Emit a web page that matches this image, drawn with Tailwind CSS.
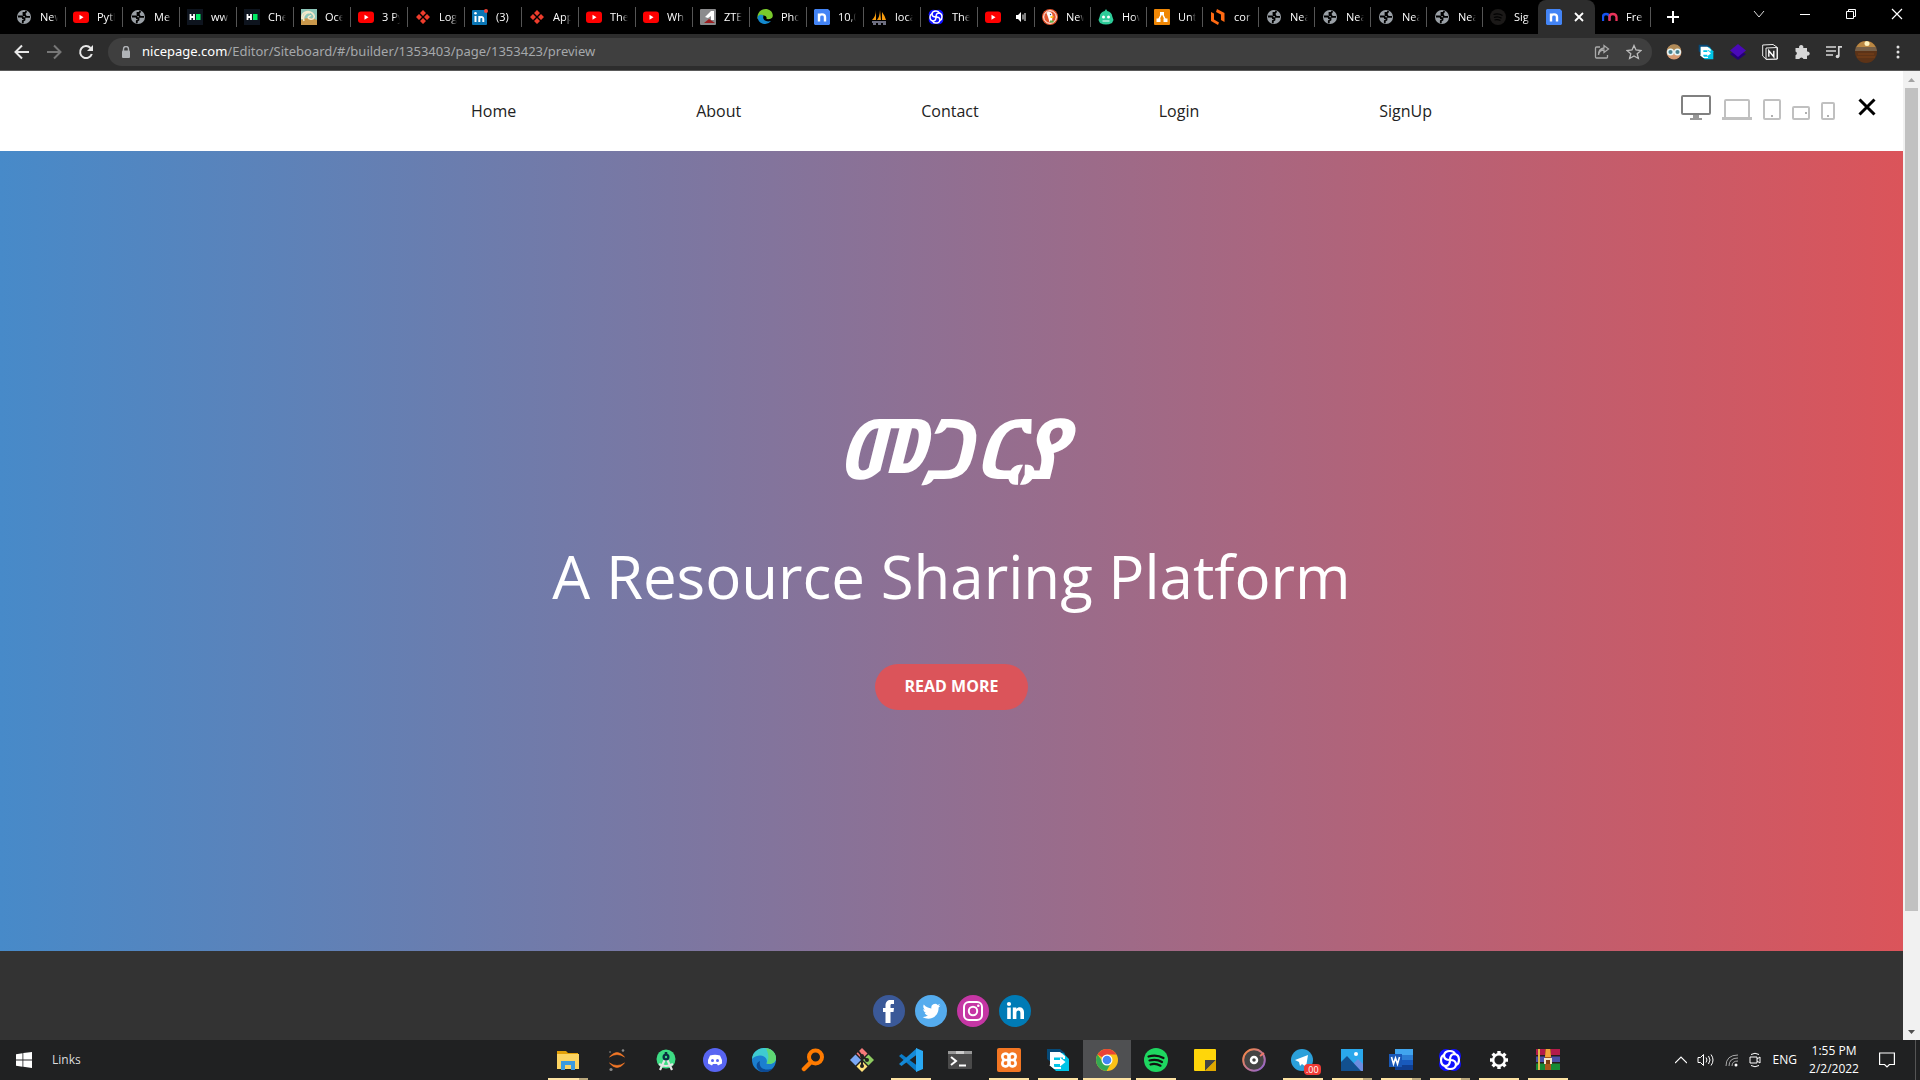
<!DOCTYPE html>
<html lang="en">
<head>
<meta charset="utf-8">
<title>Nicepage preview</title>
<script src="https://cdn.jsdelivr.net/npm/@tailwindcss/browser@4"></script>
</head>
<body class="h-screen flex flex-col overflow-hidden bg-black font-['Open_Sans','Noto_Sans',sans-serif]">

<svg class="hidden" aria-hidden="true">
  <symbol id="globe" viewBox="0 0 16 16"><circle cx="8" cy="8" r="7" fill="#9aa0a6"/><path d="M2 7.500h3.500q1.500.3 1.500 1.700h1.500v1.500L6.800 12v2.200M10.500 2.200L9 4H7.500v2H9l1 1.800h4" fill="none" stroke="#000" stroke-width="1.800"/></symbol>
  <symbol id="yt" viewBox="0 0 16 16"><rect y="2.500" width="16" height="11.500" rx="3" fill="#f00"/><path d="M6.500 5.800v5l4-2.500z" fill="#fff"/></symbol>
  <symbol id="hk" viewBox="0 0 16 16"><rect width="16" height="16" fill="#0e141e"/><path d="M3.500 5v6M7 5v6M3.500 8H7" stroke="#fff" stroke-width="1.800"/><rect x="9" y="5" width="4.500" height="6" fill="#00ea64"/></symbol>
  <symbol id="wave" viewBox="0 0 16 16"><rect width="16" height="16" fill="#8cc5b8"/><path d="M0 11q8-4 16 0v5H0z" fill="#c9974a"/><path d="M1 10C0 3 7 1 11 4s2 7-2 6 0-4 1-3M3 12C1 6 6 3 9 4" fill="none" stroke="#f3e9cc" stroke-width="1.600"/></symbol>
  <symbol id="diamond" viewBox="0 0 16 16"><path d="M8 1l3 3-3 3-3-3zM8 9l3 3-3 3-3-3zM4 5l3 3-3 3-3-3zM12 5l3 3-3 3-3-3z" fill="#ee3d2c"/></symbol>
  <symbol id="linkedin" viewBox="0 0 16 16"><rect y="1" width="15" height="15" rx="1" fill="#0a76b5"/><path d="M3.500 7v6M7.300 7v6M7.300 10c0-2.600 4-3 4 0v3" fill="none" stroke="#fff" stroke-width="2"/><circle cx="3.500" cy="4.300" r="1.300" fill="#fff"/><circle cx="14" cy="2" r="2" fill="#f04438"/></symbol>
  <symbol id="zte" viewBox="0 0 16 16"><rect width="16" height="16" rx="1" fill="#8b8b8d"/><path d="M5 8l6-6h3v9h-3V7L8 9z" fill="#fff"/><path d="M4 14l5-4 6 4z" fill="#9c1c1f"/></symbol>
  <symbol id="phedge" viewBox="0 0 16 16"><path d="M.5 8C1-2.500 15.500-2 15.800 6.500 15.800 10 12 10.500 9.500 10c1-3-3-5-6-2L.5 10z" fill="#79c92c"/><path d="M.5 8C2 5 6 5.500 6.500 7c-1.500 3.500 2 6.500 7.500 5A7.500 7.500 0 0 1 .5 8z" fill="#1389ce"/></symbol>
  <symbol id="nicepage" viewBox="0 0 16 16"><path d="M1 0h13l2 2v13l-1 1H1l-1-1V1z" fill="#4384f5"/><path d="M5 12.500V4.500M5 8c0-3.500 6-3.500 6 0v4.500" fill="none" stroke="#fff" stroke-width="2.400"/></symbol>
  <symbol id="pma" viewBox="0 0 16 16"><path d="M5 1Q5 7 1 11h4zM9 1q-.3 7-3 10h4zM11 3q3 4 4 8h-4z" fill="#f89c0e"/><path d="M1 13h14M2 15h3M7 15h3M12 15h3" stroke="#9294ac" stroke-width="1.500"/></symbol>
  <symbol id="swirl" viewBox="0 0 24 24"><g fill="#1010ff"><circle cx="8" cy="8" r="7"/><circle cx="16" cy="8" r="7"/><circle cx="8" cy="16" r="7"/><circle cx="16" cy="16" r="7"/></g><g fill="none" stroke="#fff" stroke-width="2.200" stroke-linecap="round"><path d="M12 12Q6 12 6 7.500 6.500 3 12 3q4 0 5 3"/><path d="M12 12Q12 6 16.500 6 21 6.500 21 12q0 4-3 5"/><path d="M12 12q6 0 6 4.500-.5 4.500-6 4.500-4 0-5-3"/><path d="M12 12q0 6-4.500 6Q3 17.500 3 12q0-4 3-5"/></g></symbol>
  <symbol id="duck" viewBox="0 0 16 16"><circle cx="8" cy="8" r="8" fill="#e4562f"/><circle cx="8" cy="8" r="6.300" fill="none" stroke="#fff"/><path d="M4.500 4C6 2 10.500 2.500 10.500 6.500L10 13H7.500L6 8z" fill="#fff"/><circle cx="8.500" cy="5.500" r=".7" fill="#2d4f8e"/><path d="M8.500 7.300H12L11 9H8.500z" fill="#fdc014"/><path d="M8 11.500h3.500v2H8z" fill="#5ab847"/></symbol>
  <symbol id="robot" viewBox="0 0 16 16"><path d="M8 0l1.300 2c3 .8 4.700 2.500 5 5.500L15.500 11 14 14q-6 3-12 0L.5 11l1.200-3.500c.3-3 2-4.700 5-5.500z" fill="#2dcb98"/><circle cx="5.500" cy="8" r="1.500" fill="#fff"/><circle cx="10.500" cy="8" r="1.500" fill="#fff"/><path d="M4.500 12h7" stroke="#fff"/></symbol>
  <symbol id="drawio" viewBox="0 0 16 16"><rect width="16" height="16" rx="1" fill="#f08705"/><path d="M8 4L4.500 11M8 4l3.500 7" stroke="#fff" stroke-width="1.500"/><path d="M6 3h4v3H6zM2.500 9.500h4v3.500h-4zM9.500 9.500h4v3.500h-4z" fill="#fff"/></symbol>
  <symbol id="hex" viewBox="0 0 16 16"><path d="M1 3l3 1.500v6l5 3-1 2.500L1 12zM7 0l7.500 4v9L11 11V5.500L6 3z" fill="#ff6a13"/></symbol>
  <symbol id="spotdim" viewBox="0 0 16 16"><circle cx="8" cy="8" r="8" fill="#1b1918"/><path d="M3.500 5.500q5-1.500 9 1M4 8.500q4-1.500 7.500.8M4.500 11q3-1 6 .5" fill="none" stroke="#000" stroke-width="1.300"/></symbol>
  <symbol id="mm" viewBox="0 0 16 16"><path d="M1 12V8c0-4 6-4 6.500 0v3" fill="none" stroke="#1552f0" stroke-width="2.300"/><path d="M7.500 12V8c0-4 6.500-4 7 0v4" fill="none" stroke="#e9335b" stroke-width="2.300"/></symbol>
  <symbol id="arrowapp" viewBox="0 0 24 24"><path d="M1 1h13l5 4v10H6l-5-4z" fill="#064a78"/><path d="M4 5h13l6 6v12H10l-6-6z" fill="#00c4e6"/><path d="M4 4h10l5 4v3h-2V9.500H8v2.500h6V9.500L19.500 14 14 18.500V16H8v3.500L4 17z" fill="#fff"/><path d="M4 16.500L8.500 20H15" fill="none" stroke="#fff" stroke-width="2"/></symbol>
</svg>

<!-- Tab strip -->
<header class="shrink-0">
  <div class="h-[34px] flex pl-[9px] text-[11px] text-white">
    <div id="tabs" class="flex"></div>
    <button class="w-11 flex items-center justify-center" aria-label="New tab"><svg class="size-3" viewBox="0 0 12 12" stroke="#fff" stroke-width="2"><path d="M6 0v12M0 6h12"/></svg></button>
    <div class="ml-auto flex h-7">
      <button class="w-[46px] flex items-center justify-center" aria-label="Search tabs"><svg class="size-3" viewBox="0 0 12 12" fill="none" stroke="#ddd"><path d="M1 3l5 6 5-6"/></svg></button>
      <button class="w-[46px] flex items-center justify-center" aria-label="Minimize"><svg class="size-3" viewBox="0 0 12 12" stroke="#fff"><path d="M1 6.500h10"/></svg></button>
      <button class="w-[46px] flex items-center justify-center" aria-label="Restore"><svg class="size-3" viewBox="0 0 12 12" fill="none" stroke="#fff"><path d="M1.500 3.500h7v7h-7zM3.500 3V1.500h7v7H9"/></svg></button>
      <button class="w-[46px] flex items-center justify-center" aria-label="Close"><svg class="size-3" viewBox="0 0 12 12" stroke="#fff" stroke-width="1.200"><path d="M1 1l10 10M11 1L1 11"/></svg></button>
    </div>
  </div>

  <!-- Toolbar -->
  <div class="h-[37px] flex items-center bg-[#2d2d2d] border-b border-[#5a5a5a] px-1.5">
    <div class="flex">
      <button class="w-8 flex justify-center" aria-label="Back"><svg class="size-4" viewBox="0 0 16 16" fill="none" stroke="#e8e8e8" stroke-width="2"><path d="M15 8H2M8 1.500L1.500 8 8 14.500"/></svg></button>
      <button class="w-8 flex justify-center" aria-label="Forward"><svg class="size-4" viewBox="0 0 16 16" fill="none" stroke="#777" stroke-width="2"><path d="M1 8h13M8 1.500L14.500 8 8 14.500"/></svg></button>
      <button class="w-8 flex justify-center" aria-label="Reload"><svg class="size-4" viewBox="0 0 16 16" fill="none" stroke="#e8e8e8" stroke-width="2"><path d="M13.800 10A6 6 0 1 1 12.500 4"/><path d="M15 1v6H9z" fill="#e8e8e8" stroke="none"/></svg></button>
    </div>
    <div class="ml-1.5 h-7 flex-1 flex items-center rounded-full bg-[#3f3f3f] pl-3 pr-2.5">
      <svg class="w-3 h-3" viewBox="0 0 12 12"><path d="M3.500 5V3a2.500 2.500 0 0 1 5 0v2" fill="none" stroke="#b0b3b7" stroke-width="1.400"/><rect x="2" y="4.500" width="8" height="7.500" rx="1" fill="#b0b3b7"/></svg>
      <a href="#" class="ml-2.5 flex-1 text-[13px] text-[#a5a8ab] whitespace-nowrap font-['Noto_Sans',sans-serif]"><span class="text-white">nicepage.com</span>/Editor/Siteboard/#/builder/1353403/page/1353423/preview</a>
      <button class="w-8 flex justify-center" aria-label="Share"><svg class="size-4" viewBox="0 0 16 16" fill="none" stroke="#aaa" stroke-width="1.300"><path d="M6 3H2.500a1 1 0 0 0-1 1v9a1 1 0 0 0 1 1h10a1 1 0 0 0 1-1v-2"/><path d="M4.500 11C5 7 7 6 10 6V8.500L14.500 5 10 1.500V4C6 4.500 4.500 7 4.500 11z"/></svg></button>
      <button class="w-4 ml-2 flex justify-center" aria-label="Bookmark"><svg class="size-4" viewBox="0 0 16 16" fill="none" stroke="#bbb" stroke-width="1.300"><path d="M8 1.500l2 4.500 5 .5-3.800 3.200 1.200 4.800L8 12l-4.400 2.500 1.200-4.800L1 6.500 6 6z"/></svg></button>
    </div>
    <div class="flex items-center pl-1.5">
      <button class="w-8 flex justify-center" aria-label="Extension"><svg class="size-4" viewBox="0 0 16 16"><circle cx="8" cy="8" r="7.500" fill="#d69a72"/><path d="M1 6Q3 0 8 .5 14 0 15 6z" fill="#b08a57"/><circle cx="4.500" cy="8" r="2.800" fill="#47808e" stroke="#e6f4f6" stroke-width="1.500"/><circle cx="11.500" cy="8" r="2.800" fill="#47808e" stroke="#e6f4f6" stroke-width="1.500"/></svg></button>
      <button class="w-8 flex justify-center" aria-label="Share extension"><svg class="size-4"><use href="#arrowapp"/></svg></button>
      <button class="w-8 flex justify-center" aria-label="Layers"><svg class="size-4" viewBox="0 0 16 16"><path d="M0 10l8-4 8 4-8 6z" fill="#240074"/><path d="M0 6.500L8 0l8 6.500L8 13z" fill="#4a09b8"/></svg></button>
      <button class="w-8 flex justify-center" aria-label="Notion"><svg class="size-4" viewBox="0 0 16 16"><path d="M.7 1L11 .5l4.500 3V15l-11 .5L.7 12z" fill="#222" stroke="#eee"/><path d="M4 4l11-.5V15l-11 .3z" fill="#2d2d2d" stroke="#eee"/><path d="M6.800 12.800v-6l5 6v-6" fill="none" stroke="#fff" stroke-width="1.400"/></svg></button>
      <button class="w-8 flex justify-center" aria-label="Extensions"><svg class="size-4" viewBox="0 0 16 16"><path d="M1.500 4h3.700a2.200 2.200 0 1 1 4 0H13v3.600a2.100 2.100 0 1 1 0 4V15H9.500a2.200 2.200 0 0 0-4.200 0H1.500v-3.800a2 2 0 0 0 0-3.800z" fill="#d6d6d6"/></svg></button>
      <button class="w-8 flex justify-center" aria-label="Media"><svg class="size-4" viewBox="0 0 16 16" fill="none" stroke="#d6d6d6" stroke-width="1.700"><path d="M0 3h10M0 7h10M0 11h7M12.800 12.500V2.800H16"/><circle cx="11.500" cy="12.500" r="1.800" fill="#d6d6d6" stroke="none"/></svg></button>
      <button class="w-8 flex justify-center" aria-label="Profile"><svg class="size-[22px] rounded-full" viewBox="0 0 22 22"><rect width="22" height="22" fill="#5c3317"/><rect width="22" height="7" fill="#b98743"/><rect y="6" width="22" height="4" fill="#766049"/><circle cx="12" cy="2.500" r="2.500" fill="#fff3bd"/><path d="M3 13h16M2 16h18" stroke="#7c4318"/></svg></button>
      <button class="w-8 flex justify-center" aria-label="Menu"><svg class="size-4" viewBox="0 0 16 16" fill="#e0e0e0"><circle cx="8" cy="3" r="1.500"/><circle cx="8" cy="8" r="1.500"/><circle cx="8" cy="13" r="1.500"/></svg></button>
    </div>
  </div>
</header>

<!-- Web page -->
<div class="flex-1 min-h-0 flex">
  <div class="flex-1 flex flex-col min-h-0 overflow-hidden relative">
    <nav class="h-20 shrink-0 bg-white flex items-center justify-center gap-[180px] text-[16px] text-[#222]">
      <a href="#">Home</a><a href="#">About</a><a href="#">Contact</a><a href="#">Login</a><a href="#">SignUp</a>
    </nav>
    <div class="absolute top-6 right-[27px] flex items-end gap-[11px]">
      <button aria-label="Desktop"><svg class="w-[30px] h-[25px] block" viewBox="0 0 30 25"><rect x="1" y="1" width="28" height="18" rx="1" fill="none" stroke="#808080" stroke-width="2"/><path d="M12 20h6v3h3v2H9v-2h3z" fill="#999"/></svg></button>
      <button aria-label="Laptop"><svg class="w-[30px] h-[21px] block" viewBox="0 0 30 21"><path d="M3 19V2q0-1 1-1h22q1 0 1 1v17" fill="none" stroke="#c0c0c0" stroke-width="2"/><path d="M0 18h30v3H0z" fill="#c0c0c0"/></svg></button>
      <button aria-label="Tablet"><svg class="w-[18px] h-[21px] block" viewBox="0 0 18 21"><rect x="1" y="1" width="16" height="19" rx="1" fill="none" stroke="#c0c0c0" stroke-width="2"/><path d="M8 16h2v2H8z" fill="#b0b0b0"/></svg></button>
      <button aria-label="Phone landscape"><svg class="w-[18px] h-3.5 block" viewBox="0 0 18 14"><rect x="1" y="1" width="16" height="12" rx="1" fill="none" stroke="#c0c0c0" stroke-width="2"/><path d="M13 6h2v2h-2z" fill="#b0b0b0"/></svg></button>
      <button aria-label="Phone"><svg class="w-3.5 h-[18px] block" viewBox="0 0 14 18"><rect x="1" y="1" width="12" height="16" rx="1" fill="none" stroke="#c0c0c0" stroke-width="2"/><path d="M6 13h2v2H6z" fill="#b0b0b0"/></svg></button>
      <button class="pl-3 pb-1" aria-label="Close preview"><svg class="size-[18px] block" viewBox="0 0 18 18" stroke="#000" stroke-width="3"><path d="M1.500 1.500l15 15M16.500 1.500l-15 15"/></svg></button>
    </div>
    <section class="h-[800px] shrink-0 flex flex-col items-center pt-[252px] bg-[linear-gradient(to_right,#478ac9,#db545a)] text-white">
      <h1 class="h-24 text-[84px] leading-[88px] font-bold italic font-['Open_Sans','Noto_Sans_Ethiopic','Noto_Serif_Ethiopic','Abyssinica_SIL',sans-serif]">መጋርያ</h1>
      <p class="mt-[41px] text-[60px] leading-[72px]">A Resource Sharing Platform</p>
      <button class="mt-[52px] h-[46px] px-[30px] pb-0.5 rounded-full bg-[#db545a] text-[16px] font-bold">READ MORE</button>
    </section>
    <footer class="flex-1 min-h-0 bg-[#333] flex justify-center gap-2.5 pt-11">
      <a href="#" aria-label="Facebook"><svg class="size-8 block" viewBox="0 0 32 32"><circle cx="16" cy="16" r="16" fill="#3b5998"/><path d="M12.500 28V17H10v-4h2.500v-2.500C12.500 7 14.500 5 17.500 5H21v4h-2.200C17.800 9 17.500 9.500 17.500 10.500V13H21l-.5 4h-3v11z" fill="#fff"/></svg></a>
      <a href="#" aria-label="Twitter"><svg class="size-8 block" viewBox="0 0 32 32"><circle cx="16" cy="16" r="16" fill="#55acee"/><path d="M25.500 10.500q-1 .5-2 .6 1-.8 1.500-2-1.200.7-2.300.9a3.700 3.700 0 0 0-6.300 3.400Q12 13.200 8.800 9.500c-1 1.800-.5 3.800 1.200 5q-1 0-1.700-.5c0 2 1.200 3.300 3 3.700q-.8.2-1.700 0c.5 1.500 1.800 2.600 3.500 2.600Q10.600 22.300 7.600 22c6.800 4.200 16.100.2 16-9.500q1.200-.9 1.900-2z" fill="#fff"/></svg></a>
      <a href="#" aria-label="Instagram"><svg class="size-8 block" viewBox="0 0 32 32"><circle cx="16" cy="16" r="16" fill="#c536a4"/><rect x="7" y="7" width="18" height="18" rx="5" fill="none" stroke="#fff" stroke-width="2"/><circle cx="16" cy="16" r="4.200" fill="none" stroke="#fff" stroke-width="2"/><circle cx="21.300" cy="10.800" r="1.300" fill="#fff"/></svg></a>
      <a href="#" aria-label="LinkedIn"><svg class="size-8 block" viewBox="0 0 32 32"><circle cx="16" cy="16" r="16" fill="#007bb6"/><circle cx="10" cy="9" r="2.100" fill="#fff"/><path d="M8.200 12.500h3.600V24H8.200zM13.800 12.500h3.500v1.600c2-3.200 7.700-2.500 7.700 3V24h-3.600v-6c0-3.300-4-3.200-4 0v6h-3.600z" fill="#fff"/></svg></a>
    </footer>
  </div>
  <div class="w-[17px] bg-[#f1f1f1] flex flex-col items-center justify-between" role="presentation">
    <svg class="w-[17px] h-[17px] shrink-0" viewBox="0 0 17 17"><path d="M5 11l3.500-4 3.500 4z" fill="#a3a3a3"/></svg>
    <div class="flex-1 w-full px-0.5"><div class="h-[88%] w-[13px] bg-[#c1c1c1]"></div></div>
    <svg class="w-[17px] h-[17px] shrink-0" viewBox="0 0 17 17"><path d="M5 7l3.500 4L12 7z" fill="#505050"/></svg>
  </div>
</div>

<!-- Taskbar -->
<footer class="h-10 shrink-0 bg-[#202122] flex items-stretch justify-between text-[12px] text-white">
  <div class="w-[544px] flex items-center">
    <button class="w-12 flex justify-center" aria-label="Start"><svg class="size-4" viewBox="0 0 16 16" fill="#fff"><path d="M0 2.200l6.500-1v6.300H0zM7.300 1.100L16 0v7.500H7.300zM0 8.400h6.500v6.300L0 13.800zM7.300 8.400H16V16l-8.700-1.200z"/></svg></button>
    <span class="ml-1 text-[#ddd]">Links</span>
  </div>
  <div id="apps" class="flex gap-px"></div>
  <div class="flex-1 flex items-center justify-end">
    <svg class="w-3 h-3" viewBox="0 0 12 12" fill="none" stroke="#fff" stroke-width="1.200"><path d="M0 9l6-6 6 6"/></svg>
    <svg class="ml-2.5 w-[18px] h-4" viewBox="0 0 18 16" fill="none" stroke="#fff"><path d="M1 5.500h2.500l3-3v11l-3-3H1zM9 5.500q2 2.500 0 5M11.500 4q3 4 0 8M14 2.500q4 5.500 0 11"/></svg>
    <svg class="ml-2.5 size-3.5" viewBox="0 0 14 14" fill="none" stroke="#aaa"><path d="M1 13Q1 2 13 2M4 13Q4 5 13 5M7 13Q7 8 13 8" /><circle cx="11" cy="12" r="1.500" fill="#fff" stroke="none"/></svg>
    <svg class="ml-2.5 w-3 h-4" viewBox="0 0 12 16" fill="none" stroke="#fff"><path d="M1 5h7v6H1zM8 7l3-2v6L8 9M2 2.500q4-2.500 8 0M2 13.500q4 2.500 8 0"/></svg>
    <span class="ml-3">ENG</span>
    <div class="w-[54px] ml-2.5 text-center leading-[18px] whitespace-nowrap">1:55 PM<br>2/2/2022</div>
    <svg class="ml-[18px] w-4 h-4" viewBox="0 0 16 16" fill="none" stroke="#fff" stroke-width="1.200"><path d="M.6 1h14.800v11.500h-5L8 15l-2.400-2.500h-5z"/></svg>
    <div class="ml-5 mr-1 w-px h-full bg-[#555]"></div>
  </div>
</footer>

<script>
  // [icon, label, tab width class]
  const wide = 'w-[57px]', slim = 'w-14';
  const tabs = [
    ['globe','New',wide],['yt','Pyth',wide],['globe','Me',wide],['hk','ww',wide],['hk','Che',wide],['wave','Oce',wide],
    ['yt','3 Py',wide],['diamond','Log',wide],['linkedin','(3)',wide],['diamond','App',wide],['yt','The',wide],['yt','Wh',wide],
    ['zte','ZTE',wide],['phedge','Pho',wide],['nicepage','10,0',wide],['pma','loca',wide],['swirl','The',wide],['yt','',wide],
    ['duck','New',slim],['robot','How',slim],['drawio','Unt',slim],['hex','cor',slim],['globe','Nea',slim],['globe','Nea',slim],
    ['globe','Nea',slim],['globe','Nea',slim],['spotdim','Sig','w-[55px]'],['nicepage',null,wide],['mm','Fre',slim]
  ];
  const speaker = '<svg class="ml-3.5 size-3 shrink-0" viewBox="0 0 12 12"><path d="M1 4h2l3-3v10L3 8H1z" fill="#fff"/><path d="M8 3.500v5M10 2v8" stroke="#fff"/></svg>';
  document.getElementById('tabs').innerHTML = tabs.map(([icon, label, width]) => {
    const svg = `<svg class="size-4 shrink-0"><use href="#${icon}"/></svg>`;
    if (label === null)
      return `<button class="${width} flex items-center rounded-t-lg bg-[#2d2d2d] pl-2" aria-label="Current tab">${svg}<svg class="ml-3 size-[10px]" viewBox="0 0 10 10" stroke="#fff" stroke-width="1.800"><path d="M1 1l8 8M9 1L1 9"/></svg></button>`;
    const line = icon === 'spotdim' ? 'border-transparent' : 'border-[#555]';
    const text = label ? `<span class="ml-2 w-[18px] overflow-hidden whitespace-nowrap text-left [mask-image:linear-gradient(to_right,#000_65%,transparent)]">${label}</span>` : speaker;
    return `<button class="${width} flex items-center"><span class="flex items-center w-full h-5 pl-[7px] border-r ${line}">${svg}${text}</span></button>`;
  }).join('');

  // [label, state, 24x24 drawing]; state: '' closed, 'o' open, 'm' several windows, 'a' active
  const apps = [
    ['File Explorer','m','<path d="M1 3h9l2 2h10v16H1z" fill="#e3a008"/><path d="M1 6h22v15H1z" fill="#fcd462"/><path d="M5 22v-9h14v9h-4v-5H9v5z" fill="#3b9be0"/>'],
    ['Jupyter','','<path d="M4.500 9q7.500-9 15 0-7.500-5-15 0zM4.500 15q7.500 9 15 0-7.500 5-15 0z" fill="#f37726" stroke="#f37726" stroke-width=".6"/><circle cx="18" cy="2.500" r="1.300" fill="#888"/><circle cx="6" cy="21.500" r="1.600" fill="#888"/><circle cx="5" cy="4" r="1" fill="#666"/>'],
    ['Android Studio','','<circle cx="12" cy="11" r="9.500" fill="#3ddc84"/><path d="M12 9L6 22M12 9l6 13M5 16q7 4 14 0" fill="none" stroke="#e4e4e4" stroke-width="2.200"/><circle cx="12" cy="9" r="3.500" fill="#083042"/><path d="M12 4v4" stroke="#083042" stroke-width="2.500"/><circle cx="12" cy="9" r="1.200" fill="#3ddc84"/>'],
    ['Discord','','<circle cx="12" cy="12" r="12" fill="#5865f2"/><path d="M7 7.500q5-1.500 10 0 2.500 4 2 8l-4 2-1-1.500h-4L9 17.500l-4-2q-.5-4 2-8z" fill="#fff"/><circle cx="9.500" cy="12.500" r="1.500" fill="#5865f2"/><circle cx="14.500" cy="12.500" r="1.500" fill="#5865f2"/>'],
    ['Edge','','<circle cx="12" cy="12" r="12" fill="#1b7fcf"/><path d="M0 11C1-3 23-4 24 10c0 5-5 7-9.500 5.500C17 9 8 4 0 11z" fill="#3fcbd0"/><path d="M14 0c6 1 10 5 10 10 0 5-5 7-9.500 5.500C18 10 16 5 14 0z" fill="#5fd873"/><path d="M8 13c-2 7 5 11 13.500 7A12 12 0 0 1 8 23C3 20 4 14 8 13z" fill="#0c4a94"/>'],
    ['Search','','<circle cx="14.500" cy="9" r="6.500" fill="none" stroke="#ff7b00" stroke-width="4"/><path d="M10 14l-7 7" stroke="#ff7b00" stroke-width="4.500" stroke-linecap="round"/>'],
    ['Git','','<path d="M12 0l5.500 5.500L12 11 6.500 5.500z" fill="#f67a7a"/><path d="M18.500 6.500L24 12l-5.500 5.500L13 12z" fill="#8ecb60"/><path d="M12 13l5.500 5.500L12 24l-5.500-5.500z" fill="#ffe27a"/><path d="M5.500 6.500L11 12l-5.500 5.500L0 12z" fill="#7aa8f5"/><path d="M8 3l4 5v11M12 8l5 4" fill="none" stroke="#222" stroke-width="2"/><circle cx="12" cy="8" r="2" fill="#222"/><circle cx="17" cy="12" r="2" fill="#222"/><circle cx="12" cy="18" r="2" fill="#222"/>'],
    ['VS Code','o','<path d="M0 8l2.500-2L18 17.500V24z" fill="#0a7cc8"/><path d="M0 16l2.500 2L18 6.500V0z" fill="#1489d6"/><path d="M17 0l7 3v18l-7 3z" fill="#2aa9f3"/>'],
    ['Terminal','','<rect y="3" width="24" height="18" rx="1" fill="#4a4a4a"/><path d="M0 3h24v3H0z" fill="#999"/><path d="M8 3h8v3H8z" fill="#ccc"/><path d="M3 9l5 4-5 4M11 17.500h7" fill="none" stroke="#fff" stroke-width="2"/>'],
    ['XAMPP','o','<rect width="24" height="24" rx="2" fill="#f37623"/><path d="M9 12h6M9 12a3.200 3.200 0 1 1 2.500-4.500V9.500h1V7.500A3.200 3.200 0 1 1 15 12a3.200 3.200 0 1 1-2.500 4.500V14.500h-1v2A3.200 3.200 0 1 1 9 12z" fill="none" stroke="#fff" stroke-width="2.600"/>'],
    ['Share','o','<use href="#arrowapp"/>'],
    ['Chrome','a','<circle cx="12" cy="12" r="11" fill="#fbc116"/><path d="M12 12L2.500 6.500A11 11 0 0 1 21.500 6.500H12z" fill="#ea4335"/><path d="M2.500 6.500A11 11 0 0 0 11.500 23L16 15l-4-3-4 2z" fill="#34a853"/><circle cx="12" cy="12" r="5.500" fill="#fff"/><circle cx="12" cy="12" r="4.300" fill="#4285f4"/>'],
    ['Spotify','o','<circle cx="12" cy="12" r="12" fill="#1ed760"/><path d="M4.500 8.500q8-2.500 15 1.500M5.500 12.500q7-2 12.500 1.500M6.500 16.500q5-1.500 10 1.200" fill="none" stroke="#111" stroke-width="2.200" stroke-linecap="round"/>'],
    ['Sticky Notes','','<rect x="1" y="1" width="22" height="22" rx="1" fill="#ffd60a"/><path d="M12 12h11L12 23z" fill="#444"/><path d="M23 12v11H12z" fill="#e0a800"/>'],
    ['Groove Music','','<defs><linearGradient id="ring" x1="0" y1="0" x2="1" y2="1"><stop stop-color="#ff8a3d"/><stop offset="1" stop-color="#8b63d8"/></linearGradient></defs><circle cx="12" cy="12" r="10.800" fill="#444" stroke="url(#ring)" stroke-width="2"/><circle cx="12" cy="12" r="3" fill="none" stroke="#fff" stroke-width="2.500"/><path d="M22 5l-4 3" stroke="#ee7869" stroke-width="2"/>'],
    ['Telegram','o','<circle cx="11" cy="12" r="11" fill="#2ba0da"/><path d="M4 12l13-5-2 12-4-3-2 2-1-4z" fill="#fff"/>'],
    ['Photos','m','<rect x="1" y="1" width="22" height="22" fill="#2aa8ec"/><path d="M10 19l8-8 5 5v7H10z" fill="#6c8de0"/><path d="M1 14l6-6 14 15H1z" fill="#12508f"/><circle cx="16" cy="6" r="2" fill="#fff"/>'],
    ['Word','m','<path d="M6 1h18v6H6z" fill="#41a5ee"/><path d="M6 7h18v5H6z" fill="#2b7cd3"/><path d="M6 12h18v5H6z" fill="#185abd"/><path d="M6 17h18v5H6z" fill="#103f91"/><rect y="6" width="13" height="13" fill="#1958b7"/><path d="M2.500 9l2 7 2-6 2 6 2-7" fill="none" stroke="#fff" stroke-width="1.600"/>'],
    ['Nested','m','<use href="#swirl"/>'],
    ['Settings','o','<circle cx="12" cy="12" r="5.800" fill="none" stroke="#fff" stroke-width="2.400"/><path d="M12 3v3M12 18v3M3 12h3M18 12h3M5.600 5.600l2 2M16.400 16.400l2 2M5.600 18.400l2-2M16.400 7.600l2-2" stroke="#fff" stroke-width="3.400"/>'],
    ['WinRAR','o','<path d="M0 1h24v7H0z" fill="#b31b4b"/><path d="M0 8h24v7H0z" fill="#4a4fa8"/><path d="M0 15h24v7H0z" fill="#168a35"/><path d="M0 7h24v1.500H0zM0 14h24v1.500H0z" fill="#2a1c1c"/><path d="M3 1v21" stroke="#dfb84b" stroke-width="2"/><path d="M9 1h6v21H9z" fill="#a8551a"/><path d="M10 1h4l1 8H9z" fill="#f3a33b"/><path d="M8 10h8v6H8z" fill="#f4e6cc"/><path d="M10 12h4v4h-4z" fill="#7a3d12"/>']
  ];
  const badge = '<span class="absolute left-[25px] top-6 h-[11px] px-0.5 rounded-sm bg-[#ef3b36] text-[9px] leading-[11px]">.00</span>';
  const bars = {
    '': '',
    o: '<span class="absolute bottom-0 inset-x-1 h-0.5 bg-[#fde3a3]"></span>',
    a: '<span class="absolute bottom-0 inset-x-0 h-0.5 bg-[#fde3a3]"></span>',
    m: '<span class="absolute bottom-0 inset-x-1 h-0.5 bg-[#b9a77c] flex"><span class="w-[31px] bg-[#fde3a3]"></span></span>'
  };
  document.getElementById('apps').innerHTML = apps.map(([name, state, art]) =>
    `<button class="relative w-12 flex items-center justify-center ${state === 'a' ? 'bg-[#4f5052]' : ''}" aria-label="${name}"><svg class="size-6" viewBox="0 0 24 24">${art}</svg>${name === 'Telegram' ? badge : ''}${bars[state]}</button>`
  ).join('');
</script>
</body>
</html>
